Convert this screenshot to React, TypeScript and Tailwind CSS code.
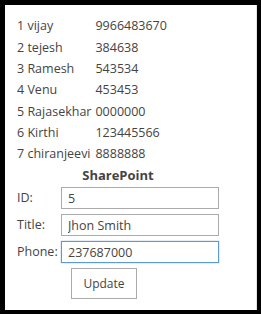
export default function App() {
  const rows = [
    ["1", "vijay", "9966483670"],
    ["2", "tejesh", "384638"],
    ["3", "Ramesh", "543534"],
    ["4", "Venu", "453453"],
    ["5", "Rajasekhar", "0000000"],
    ["6", "Kirthi", "123445566"],
    ["7", "chiranjeevi", "8888888"],
  ]

  return (
    <div className="w-[261px] h-[314px] bg-black pt-[5px] pl-[5px] pr-[4px] pb-[4px]">
      <div className="w-full h-full bg-white border-r border-[#e4e4e4] pt-[11px] pl-[12px] text-[12.5px] text-[#444] font-['Open_Sans',sans-serif]">
        <table className="border-collapse">
          <tbody>
            {rows.map((r) => (
              <tr key={r[0]} className="h-[21.3px] leading-none">
                <td className="pr-[4px] whitespace-nowrap">
                  {r[0]} {r[1]}
                </td>
                <td>{r[2]}</td>
              </tr>
            ))}
          </tbody>
        </table>

        <div className="w-[202px] text-center font-bold text-[13px] -mt-[1px] h-[22px] leading-[22px]">SharePoint</div>

        <div className="flex flex-col gap-[5px] mt-[1px]">
          <div className="flex items-center">
            <span className="w-[44px]">ID:</span>
            <input
              readOnly
              value="5"
              className="w-[158px] h-[22px] border border-[#ababab] px-[6px] outline-none text-[#444]"
            />
          </div>
          <div className="flex items-center">
            <span className="w-[44px]">Title:</span>
            <input
              readOnly
              value="Jhon Smith"
              className="w-[158px] h-[22px] border border-[#ababab] px-[6px] outline-none text-[#444]"
            />
          </div>
          <div className="flex items-center">
            <span className="w-[44px]">Phone:</span>
            <input
              readOnly
              value="237687000"
              className="w-[158px] h-[22px] border border-[#5b9bd5] px-[6px] outline-none text-[#444] shadow-[0_0_1px_#5b9bd5]"
            />
          </div>
        </div>

        <button className="ml-[54px] mt-[5px] w-[66px] h-[31px] border border-[#ababab] bg-white text-[12px] text-[#444]">
          Update
        </button>
      </div>
    </div>
  )
}
